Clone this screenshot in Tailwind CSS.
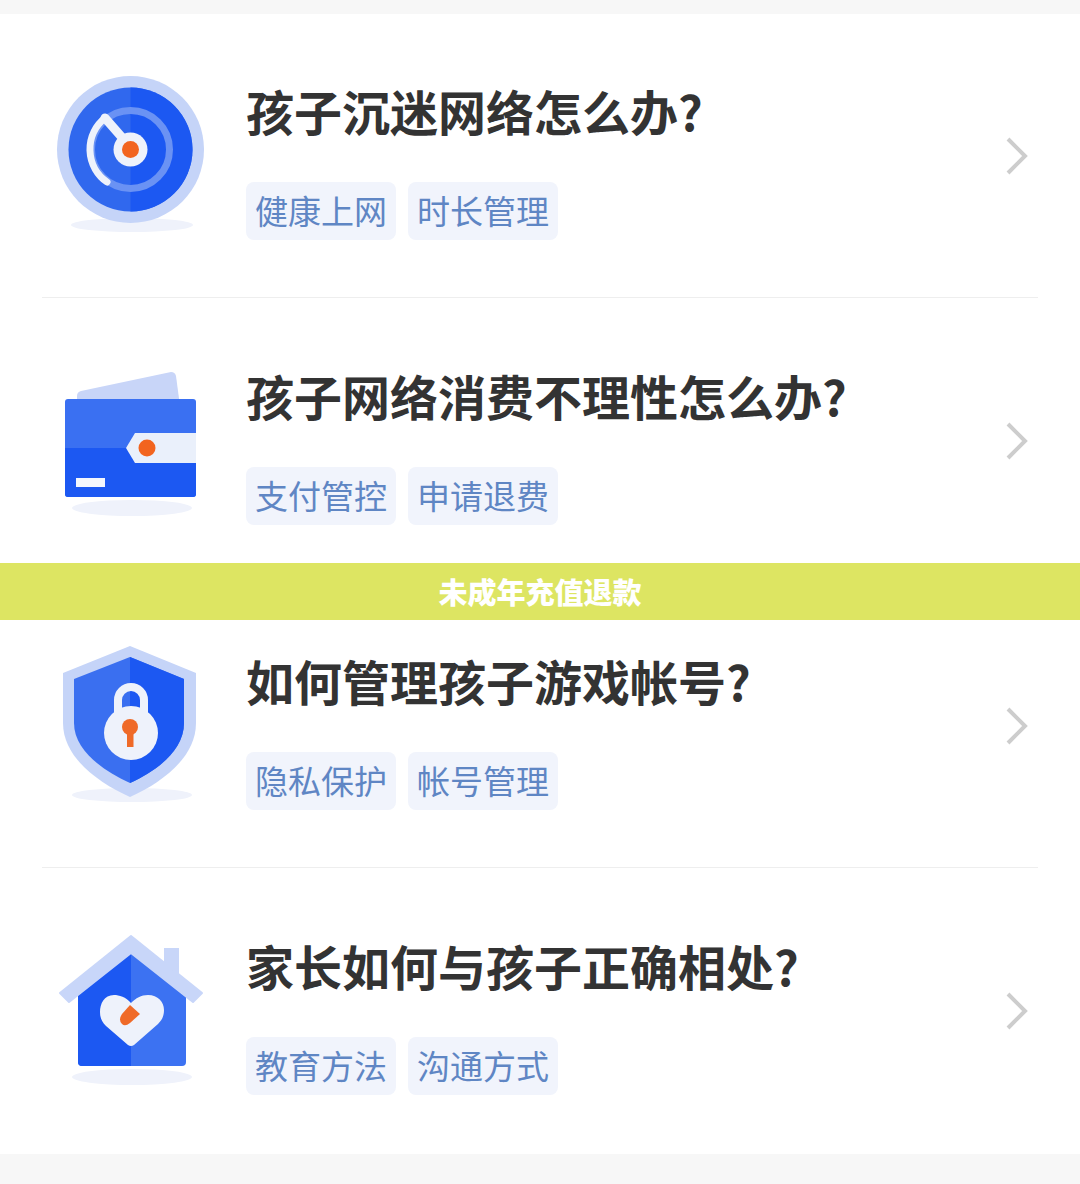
<!DOCTYPE html>
<html lang="zh-CN">
<head>
<meta charset="utf-8">
<script src="https://cdn.jsdelivr.net/npm/@tailwindcss/browser@4"></script>
</head>
<body class="bg-white font-['Noto_Sans_CJK_SC','Noto_Sans',sans-serif]">
<div class="relative w-[1080px] h-[1184px] overflow-hidden bg-[#f7f7f7] flex flex-col">
  <div class="h-[14px] shrink-0"></div>
  <div class="h-[1140px] shrink-0 bg-white px-[42px] flex flex-col">

    <div class="h-[283px] flex items-start">
      <div class="w-[204px] shrink-0 pl-[14px] pt-[60px]">
        <svg width="150" height="160" viewBox="0 0 150 160">
          <ellipse cx="76" cy="151" rx="61" ry="7" fill="#eff2fb"/>
          <circle cx="74.500" cy="75.500" r="73.500" fill="#c5d4f8"/>
          <circle cx="74.500" cy="75.500" r="62" fill="#3068ee"/>
          <path d="M74.500 13.500a62 62 0 0 1 0 124z" fill="#1c58f2"/>
          <circle cx="74.500" cy="75.500" r="39" fill="none" stroke="#6a92f4" stroke-width="7"/>
          <path d="M51 108A40 40 0 0 1 49 44" fill="none" stroke="#eef2fb" stroke-width="7" stroke-linecap="round"/>
          <path d="M49 44L70 68" stroke="#eef2fb" stroke-width="9" stroke-linecap="round"/>
          <circle cx="74.500" cy="75.500" r="17" fill="#eef2fb"/>
          <circle cx="74.500" cy="75.500" r="8.500" fill="#f2641f"/>
        </svg>
      </div>
      <div class="flex-1 pt-[58px]">
        <div class="text-[48px] leading-[76px] font-bold text-[#333333]">孩子沉迷网络怎么办?</div>
        <div class="flex gap-3 mt-[34px]">
          <span class="h-[58px] w-[150px] flex items-center justify-center rounded-lg bg-[#f1f4fc] text-[33px] text-[#5f86c4]">健康上网</span>
          <span class="h-[58px] w-[150px] flex items-center justify-center rounded-lg bg-[#f1f4fc] text-[33px] text-[#5f86c4]">时长管理</span>
        </div>
      </div>
      <svg class="mt-[122px] mr-[8px]" width="26" height="40" viewBox="0 0 26 40"><path d="M4 3L21 20L4 37" fill="none" stroke="#cdcdcd" stroke-width="4"/></svg>
    </div>
    <div class="h-[1px] bg-[#eeeeee]"></div>

    <div class="h-[284px] flex items-start">
      <div class="w-[204px] shrink-0 pl-[14px] pt-[60px]">
        <svg width="150" height="160" viewBox="0 0 150 160">
          <ellipse cx="76" cy="150" rx="60" ry="8" fill="#eff2fb"/>
          <path d="M21 38q0-4 4-5l90-19q4 0 5 4l4 30H21z" fill="#c8d5f8"/>
          <rect x="9" y="41" width="131" height="98" rx="3" fill="#3a70f2"/>
          <path d="M9 90H140V136q0 3-3 3H12q-3 0-3-3z" fill="#1c58f2"/>
          <path d="M140 75H79L70 90l9 15h61z" fill="#eaf0fb"/>
          <circle cx="91" cy="90" r="8.500" fill="#f2641f"/>
          <rect x="20" y="120" width="29" height="9" fill="#f4f7fd"/>
        </svg>
      </div>
      <div class="flex-1 pt-[59px]">
        <div class="text-[48px] leading-[76px] font-bold text-[#333333]">孩子网络消费不理性怎么办?</div>
        <div class="flex gap-3 mt-[34px]">
          <span class="h-[58px] w-[150px] flex items-center justify-center rounded-lg bg-[#f1f4fc] text-[33px] text-[#5f86c4]">支付管控</span>
          <span class="h-[58px] w-[150px] flex items-center justify-center rounded-lg bg-[#f1f4fc] text-[33px] text-[#5f86c4]">申请退费</span>
        </div>
      </div>
      <svg class="mt-[123px] mr-[8px]" width="26" height="40" viewBox="0 0 26 40"><path d="M4 3L21 20L4 37" fill="none" stroke="#cdcdcd" stroke-width="4"/></svg>
    </div>
    <div class="h-[1px] bg-[#eeeeee]"></div>

    <div class="h-[284px] flex items-start">
      <div class="w-[204px] shrink-0 pl-[14px] pt-[60px]">
        <svg width="150" height="160" viewBox="0 0 150 160">
          <ellipse cx="76" cy="152" rx="60" ry="7" fill="#eff2fb"/>
          <path d="M74 3L140 30V80C140 115 105 140 74 154C43 140 7 115 7 80V30z" fill="#c5d4f8"/>
          <path d="M74 14L128 36V80C128 108 100 128 74 140C48 128 18 108 18 80V36z" fill="#3a6ff0"/>
          <path d="M74 14L128 36V80C128 108 100 128 74 140z" fill="#1c58f2"/>
          <path d="M62 72V57a13 13 0 0 1 26 0V72" fill="none" stroke="#eef2fb" stroke-width="8"/>
          <circle cx="75" cy="90" r="27" fill="#eef2fb"/>
          <circle cx="74" cy="84" r="8" fill="#ef6a28"/>
          <rect x="71" y="86" width="6.500" height="18" fill="#ef6a28"/>
        </svg>
      </div>
      <div class="flex-1 pt-[59px]">
        <div class="text-[48px] leading-[76px] font-bold text-[#333333]">如何管理孩子游戏帐号?</div>
        <div class="flex gap-3 mt-[34px]">
          <span class="h-[58px] w-[150px] flex items-center justify-center rounded-lg bg-[#f1f4fc] text-[33px] text-[#5f86c4]">隐私保护</span>
          <span class="h-[58px] w-[150px] flex items-center justify-center rounded-lg bg-[#f1f4fc] text-[33px] text-[#5f86c4]">帐号管理</span>
        </div>
      </div>
      <svg class="mt-[123px] mr-[8px]" width="26" height="40" viewBox="0 0 26 40"><path d="M4 3L21 20L4 37" fill="none" stroke="#cdcdcd" stroke-width="4"/></svg>
    </div>
    <div class="h-[1px] bg-[#eeeeee]"></div>

    <div class="h-[286px] flex items-start">
      <div class="w-[204px] shrink-0 pl-[14px] pt-[64px]">
        <svg width="150" height="160" viewBox="0 0 150 160">
          <ellipse cx="76" cy="145" rx="60" ry="8" fill="#eff2fb"/>
          <path d="M108 16h15v40h-15z" fill="#c8d6f9"/>
          <path d="M22 63L75 21L130 63V130q0 4-4 4H26q-4 0-4-4z" fill="#3c72f2"/>
          <path d="M75 21L22 63V130q0 4 4 4H75z" fill="#1c58f2"/>
          <path d="M75 4L146 61L137 70L75 21L13 70L4 61z" fill="#c8d6f9" stroke="#c8d6f9" stroke-width="2" stroke-linejoin="round"/>
          <path d="M75 71C70 65 63 63 58 63C48 63 44 72 44 80C44 86 46 90 50 94L72 113Q75 115 78 113L102 92C106 88 108 84 108 78C108 70 102 63 92 63C85 63 80 66 75 71z" fill="#eef2fb"/>
          <path d="M74 73L84 82L74 91Q69 95 66 92Q62 88 66 82z" fill="#ef6a28"/>
        </svg>
      </div>
      <div class="flex-1 pt-[59px]">
        <div class="text-[48px] leading-[76px] font-bold text-[#333333]">家长如何与孩子正确相处?</div>
        <div class="flex gap-3 mt-[34px]">
          <span class="h-[58px] w-[150px] flex items-center justify-center rounded-lg bg-[#f1f4fc] text-[33px] text-[#5f86c4]">教育方法</span>
          <span class="h-[58px] w-[150px] flex items-center justify-center rounded-lg bg-[#f1f4fc] text-[33px] text-[#5f86c4]">沟通方式</span>
        </div>
      </div>
      <svg class="mt-[123px] mr-[8px]" width="26" height="40" viewBox="0 0 26 40"><path d="M4 3L21 20L4 37" fill="none" stroke="#cdcdcd" stroke-width="4"/></svg>
    </div>
  </div>
  <div class="absolute left-0 top-[563px] w-full h-[57px] bg-[#dde562] flex items-center justify-center text-[29px] font-black text-white">未成年充值退款</div>
</div>
</body>
</html>
